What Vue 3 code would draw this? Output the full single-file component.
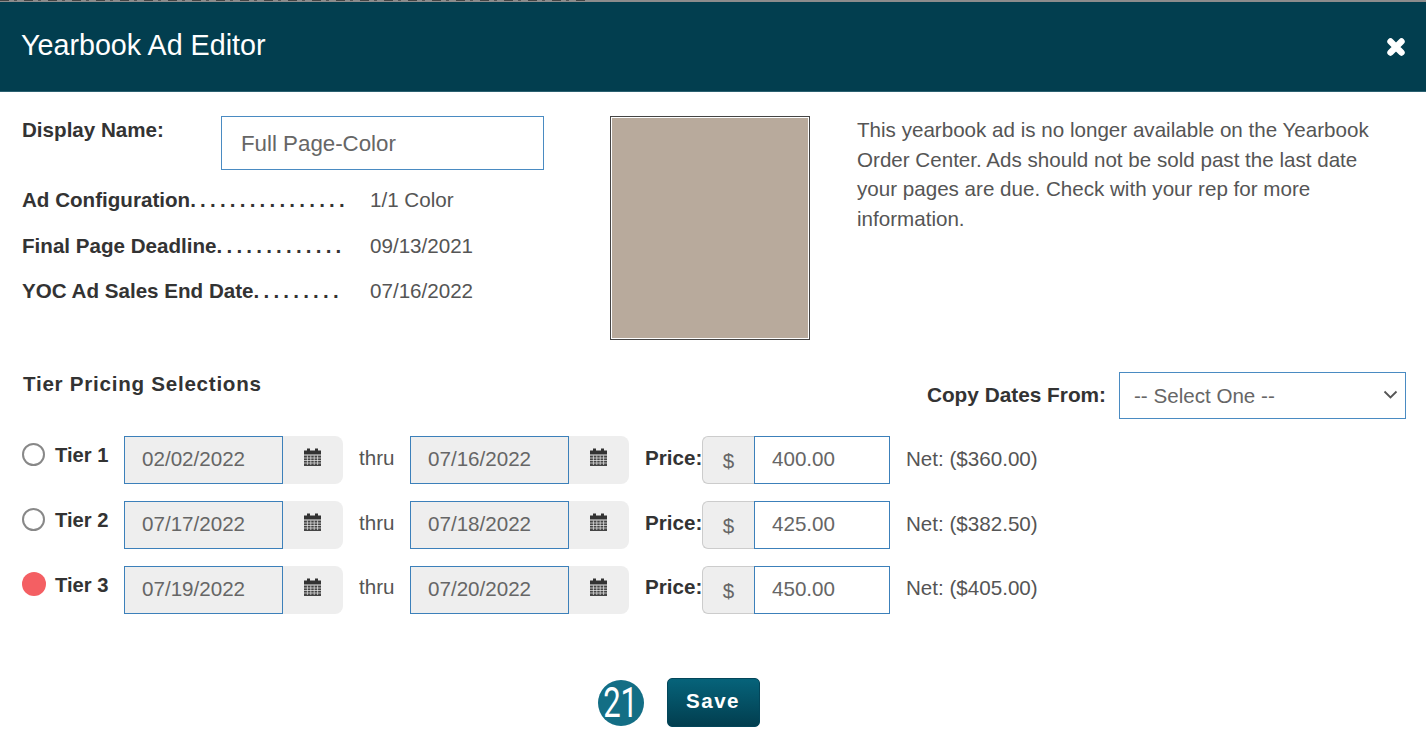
<script setup>
const rows = [
  { id: 1, from: '02/02/2022', to: '07/16/2022', price: '400.00', net: 'Net: ($360.00)', on: false },
  { id: 2, from: '07/17/2022', to: '07/18/2022', price: '425.00', net: 'Net: ($382.50)', on: false },
  { id: 3, from: '07/19/2022', to: '07/20/2022', price: '450.00', net: 'Net: ($405.00)', on: true },
]
const facts = [
  { label: 'Ad Configuration', dots: '................', value: '1/1 Color' },
  { label: 'Final Page Deadline', dots: '.............', value: '09/13/2021' },
  { label: 'YOC Ad Sales End Date', dots: '.........', value: '07/16/2022' },
]
</script>

<template>
  <div class="page">
    <div class="strip"></div>
    <header class="head">
      <h1 class="title">Yearbook Ad Editor</h1>
      <svg class="close" width="18" height="18" viewBox="0 0 18 18" aria-label="Close">
        <path d="M3.500 3.500L14.500 14.500M14.500 3.500L3.500 14.500" stroke="#fff" stroke-width="6.400" stroke-linecap="round" />
      </svg>
    </header>

    <section class="top">
      <div class="info">
        <div class="name-row">
          <label class="lbl name-lbl">Display Name:</label>
          <input class="name-input" value="Full Page-Color" readonly />
        </div>
        <div v-for="f in facts" :key="f.label" class="fact">
          <span class="lbl fact-lbl">{{ f.label }}<span class="dots">{{ f.dots }}</span></span>
          <span class="val">{{ f.value }}</span>
        </div>
      </div>
      <div class="thumb"><div class="thumb-fill"></div></div>
      <p class="notice">This yearbook ad is no longer available on the Yearbook Order Center. Ads should not be sold past the last date your pages are due. Check with your rep for more information.</p>
    </section>

    <section class="tier-head">
      <h2 class="tier-title">Tier Pricing Selections</h2>
      <div class="copy">
        <label class="lbl copy-lbl">Copy Dates From:</label>
        <span class="select-wrap">
          <select class="copy-select"><option>-- Select One --</option></select>
          <svg class="chev" width="15" height="9" viewBox="0 0 15 9"><path d="M1.500 1.500L7.500 7.500L13.500 1.500" fill="none" stroke="#555" stroke-width="1.800" /></svg>
        </span>
      </div>
    </section>

    <section class="tiers">
      <div v-for="r in rows" :key="r.id" class="tier" :class="'tier-' + r.id">
        <span class="radio" :class="{ on: r.on }"></span>
        <span class="lbl tier-lbl">Tier {{ r.id }}</span>
        <div v-for="d in [r.from, r.to]" :key="d" class="date-group">
          <input class="field date" :value="d" readonly />
          <span class="cal">
            <svg width="17" height="18" viewBox="0 0 17 18">
              <path fill="#333" d="M3 0.500h3v2h5v-2h3v2h3v4h-17v-4h3z" />
              <path fill="#444" d="M0 7.500h17v10.500h-17z" />
              <path stroke="#eee" stroke-width=".7" fill="none" d="M0 10h17M0 12.500h17M0 15h17M3.400 7.500v9.500M6.800 7.500v9.500M10.200 7.500v9.500M13.600 7.500v9.500" />
            </svg>
          </span>
        </div>
        <span class="lbl price-lbl">Price:</span>
        <div class="price-group">
          <span class="dollar">$</span>
          <input class="field price" :value="r.price" readonly />
        </div>
        <span class="net">{{ r.net }}</span>
      </div>
    </section>

    <footer class="foot">
      <span class="badge"><span class="badge-num">21</span></span>
      <button class="save">Save</button>
    </footer>
  </div>
</template>

<style>
html, body { margin: 0; background: #fff; overflow: hidden; }
</style>

<style scoped>
.page {
  width: 1426px;
  height: 748px;
  overflow: hidden;
  font-family: "Liberation Sans", Arial, sans-serif;
  font-size: 20.6px;
  color: #555;
  background: #fff;
}
.strip { height: 2px; background: #8c8c8c; }
.strip::before {
  content: "";
  display: block;
  width: 590px;
  height: 1px;
  background: repeating-linear-gradient(90deg, #444 0 9px, #8c8c8c 9px 14px, #555 14px 17px, #8c8c8c 17px 24px);
}
.head {
  height: 90px;
  background: #023e4f;
  border-bottom: 1px solid #2a6070;
  box-sizing: border-box;
  display: flex;
  align-items: center;
  justify-content: space-between;
  padding: 0 21px 2px 21px;
}
.title { margin: 0; font-size: 28.7px; font-weight: 400; color: #fff; }
.close { margin-top: 2px; }
.lbl { font-weight: 700; color: #333; white-space: nowrap; }

.top { display: flex; padding: 24px 0 0 22px; height: 248px; box-sizing: border-box; }
.info { width: 522px; flex: none; }
.name-row { display: flex; height: 54px; margin-bottom: 7.500px; }
.name-lbl { width: 199px; flex: none; margin-top: 2px; }
.name-input {
  width: 323px; height: 54px; box-sizing: border-box;
  border: 1px solid #4a8bc2; outline: 0; padding: 2px 19px 0;
  font: 22.300px "Liberation Sans", Arial, sans-serif; color: #666;
}
.fact { display: flex; height: 45.500px; align-items: center; }
.fact-lbl { width: 348px; flex: none; }
.dots { letter-spacing: 4.200px; }
.thumb {
  margin-left: 66px; flex: none; width: 200px; height: 224px; box-sizing: border-box;
  border: 1px solid #444; padding: 1px; background: #fff;
}
.thumb-fill { height: 100%; background: #b8aa9c; }
.notice { margin: -1px 0 0 47px; width: 530px; line-height: 29.500px; }

.tier-head { display: flex; justify-content: space-between; padding: 32px 20px 0 23px; height: 96px; box-sizing: border-box; }
.tier-title { margin: 0; font-size: 20.6px; font-weight: 700; color: #333; letter-spacing: 0.740px; line-height: 24px; }
.copy { display: flex; align-items: center; gap: 13px; height: 47px; }
.copy-lbl { font-size: 20.800px; margin-top: -2px; }
.select-wrap { position: relative; display: block; width: 287px; height: 47px; }
.copy-select {
  appearance: none;
  display: block; width: 287px; height: 47px; box-sizing: border-box; background: #fff;
  border: 1px solid #4a8bc2; border-radius: 0; padding: 0 14px; outline: 0;
  font: 20.6px "Liberation Sans", Arial, sans-serif; color: #666;
}
.chev { position: absolute; right: 8px; top: 18px; pointer-events: none; }

.tiers { display: flex; flex-direction: column; gap: 17px; padding: 0 0 0 22px; }
.tier { display: flex; height: 48px; align-items: center; }
.radio {
  width: 23px; height: 23px; box-sizing: border-box; border-radius: 50%;
  border: 2px solid #888; background: #fff; flex: none; margin-top: -12px;
}
.radio.on { border: 0; background: #f45f63; width: 24px; height: 24px; }
.tier-lbl { width: 69px; margin: -10px 0 0 10px; flex: none; font-size: 20.200px; }
.radio.on + .tier-lbl { margin-left: 9px; }
.date-group { display: flex; width: 219px; height: 48px; background: #eee; border-radius: 0 8px 8px 0; flex: none; }
.date-group + .date-group { margin-left: 67px; position: relative; }
.date-group + .date-group::before {
  content: "thru"; position: absolute; left: -51px; top: 50%; transform: translateY(-14px);
}
.field {
  height: 48px; box-sizing: border-box; border: 1px solid #3c80ba; outline: 0; border-radius: 0;
  font: 20.6px "Liberation Sans", Arial, sans-serif; color: #666; margin: 0;
}
.date { width: 159px; background: #eee; padding: 0 17px 2px; }
.cal { flex: 1; display: flex; align-items: center; justify-content: center; padding: 0 2px 7px 0; }
.price-lbl { width: 57px; padding-left: 16px; flex: none; margin-top: -5px; }
.price-group { display: flex; width: 188px; flex: none; }
.dollar {
  width: 52px; height: 48px; box-sizing: border-box; background: #eee; border: 1px solid #ccc; border-right: 0;
  border-radius: 6px 0 0 6px; display: flex; align-items: center; justify-content: center; color: #666;
  padding-top: 2px;
}
.price { width: 136px; background: #fff; padding: 0 17px 2px; }
.net { margin: -3px 0 0 16px; }
.tier-3 .net { margin-top: -5px; }
.tier-3 .price-lbl { margin-top: -7px; }
.tier-3 .date-group + .date-group::before { transform: translateY(-15px); }

.foot { display: flex; align-items: center; justify-content: center; gap: 23px; margin-top: 64px; padding-right: 69px; }
.badge {
  width: 46px; height: 46px; border-radius: 50%; background: #136e85; color: #fff;
  display: flex; align-items: center; justify-content: center; margin-top: 1px;
}
.badge-num { font: 400 42px/46px Roboto, "Liberation Sans", sans-serif; display: block; transform: scaleX(.74); }
.save {
  width: 93px; height: 49px; border: 1px solid #03465a; border-radius: 5px; padding: 0 0 4px;
  background: linear-gradient(#06637a, #023e4f); color: #fff;
  font: 700 20.6px "Liberation Sans", Arial, sans-serif; letter-spacing: 1.500px;
}
</style>
